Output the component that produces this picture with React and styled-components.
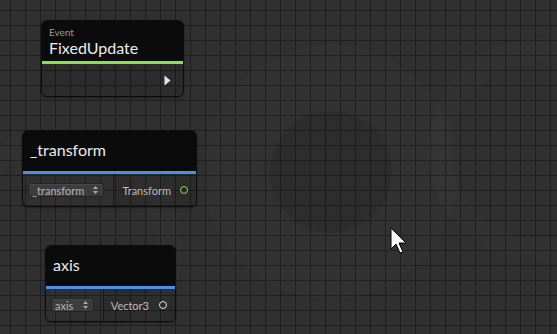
import React from 'react'
import styled, { createGlobalStyle } from 'styled-components'

const Global = createGlobalStyle`
  html, body { margin: 0; padding: 0; }
  body { font-family: Lato, "Open Sans", sans-serif; }
  * { box-sizing: border-box; }
`

const Canvas = styled.div`
  position: relative;
  width: 557px;
  height: 334px;
  overflow: hidden;
  background-color: #303030;
  background-image:
    linear-gradient(to right, #1e1e1e 1px, transparent 1px),
    linear-gradient(to bottom, #1e1e1e 1px, transparent 1px);
  background-size: 15px 15px;
  background-position: 10px 10px;
`

const Watermark = styled.svg`
  position: absolute;
  left: 0;
  top: 0;
  pointer-events: none;
`

const Node = styled.div`
  position: absolute;
  left: ${p => p.x}px;
  top: ${p => p.y}px;
  width: ${p => p.w}px;
  border: 1px solid #0c0c0c;
  border-radius: 6px;
  overflow: hidden;
  box-shadow: 0 1px 2px rgba(0,0,0,0.35);
`

const Header = styled.div`
  height: 43px;
  background: #0b0b0b;
  padding: 0 7px ${p => p.lift ? 2 : 0}px;
  display: flex;
  flex-direction: column;
  justify-content: center;
  border-bottom: 3px solid ${p => p.accent};
`

const Kind = styled.div`
  font-size: 10px;
  color: #9a9a9a;
  line-height: 12px;
  margin-top: 2px;
`

const Title = styled.div`
  font-size: 16px;
  color: #ececec;
  line-height: 20px;
`

const Body = styled.div`
  height: 32px;
  display: flex;
  background: rgba(0,0,0,0.08);
`

const InputSide = styled.div`
  width: ${p => p.w}px;
  display: flex;
  align-items: center;
  padding-left: 5px;
  background: rgba(255,255,255,0.025);
  border-right: 1px solid rgba(0,0,0,0.45);
`

const OutputSide = styled.div`
  flex: 1;
  display: flex;
  align-items: center;
  justify-content: flex-end;
  gap: ${p => p.gap || 9}px;
  padding-right: 8px;
`

const Dropdown = styled.div`
  width: ${p => p.w}px;
  height: 14px;
  display: flex;
  align-items: center;
  justify-content: space-between;
  padding: 0 5px 0 3px;
  background: #3d3d3d;
  border: 1px solid #242424;
  border-radius: 3px;
  box-shadow: inset 0 1px 0 rgba(255,255,255,0.06);
  font-size: 11px;
  color: #b4b4b4;
`

const Label = styled.span`
  font-size: 11px;
  color: #bdbdbd;
`

const Port = styled.span`
  width: 8px;
  height: 8px;
  border-radius: 50%;
  border: 1.5px solid ${p => p.color};
`

const FlowOut = styled.div`
  flex: 1;
  display: flex;
  align-items: center;
  justify-content: flex-end;
  padding-right: 12px;
`

const Cursor = styled.svg`
  position: absolute;
  left: 390px;
  top: 227px;
`

const Arrows = () => (
  <svg width="5" height="8" viewBox="0 0 5 8">
    <path d="M2.5 0 L5 3 L0 3 Z M2.5 8 L5 5 L0 5 Z" fill="#a8a8a8" />
  </svg>
)

export default function App() {
  return (
    <>
      <Global />
      <Canvas>
        <Watermark width="557" height="334" viewBox="0 0 557 334">
          <circle cx="331" cy="172" r="128" fill="rgba(255,255,255,0.012)" />
          <circle cx="331" cy="172" r="61" fill="rgba(0,0,0,0.085)" />
          <circle cx="60" cy="250" r="110" fill="none" stroke="rgba(255,255,255,0.012)" strokeWidth="24" />
          <circle cx="540" cy="150" r="100" fill="none" stroke="rgba(255,255,255,0.012)" strokeWidth="24" />
        </Watermark>

        <Node x={41} y={20} w={143}>
          <Header accent="#86e24e">
            <Kind>Event</Kind>
            <Title>FixedUpdate</Title>
          </Header>
          <Body>
            <FlowOut>
              <svg width="7" height="11" viewBox="0 0 7 11">
                <path d="M0.5 0.5 L6.5 5.5 L0.5 10.5 Z" fill="#e6e6e6" />
              </svg>
            </FlowOut>
          </Body>
        </Node>

        <Node x={22} y={130} w={175}>
          <Header accent="#4a8fe8" lift>
            <Title>_transform</Title>
          </Header>
          <Body>
            <InputSide w={91}>
              <Dropdown w={76}>
                <span>_transform</span>
                <Arrows />
              </Dropdown>
            </InputSide>
            <OutputSide>
              <Label>Transform</Label>
              <Port color="#86e24e" />
            </OutputSide>
          </Body>
        </Node>

        <Node x={45} y={245} w={131}>
          <Header accent="#4a8fe8" lift>
            <Title>axis</Title>
          </Header>
          <Body>
            <InputSide w={58}>
              <Dropdown w={43}>
                <span>axis</span>
                <Arrows />
              </Dropdown>
            </InputSide>
            <OutputSide gap={10}>
              <Label>Vector3</Label>
              <Port color="#e0e0e0" />
            </OutputSide>
          </Body>
        </Node>

        <Cursor width="18" height="28" viewBox="0 0 18 28">
          <path d="M1 1 L1 22 L6 17 L10 26 L13 25 L9 16 L16 16 Z" fill="#ffffff" stroke="#000" strokeWidth="1" strokeLinejoin="round" />
        </Cursor>
      </Canvas>
    </>
  )
}
